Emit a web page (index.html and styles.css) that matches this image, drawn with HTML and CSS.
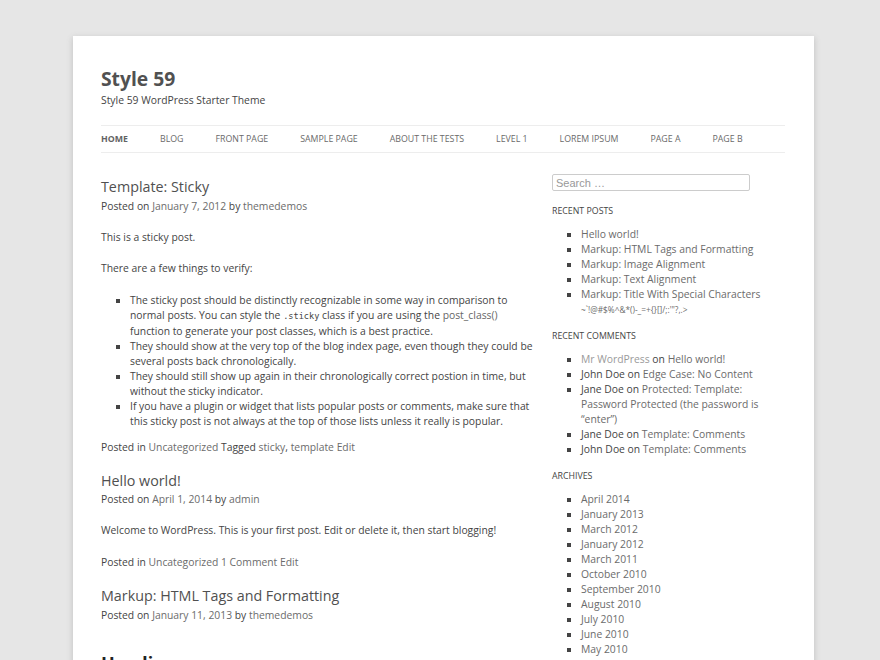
FILE: index.html
```html
<!DOCTYPE html>
<html>
<head>
<meta charset="utf-8">
<link rel="stylesheet" href="styles.css">
</head>
<body>
<div class="site">
  <header class="site-header">
    <h1 class="site-title">Style 59</h1>
    <p class="site-desc">Style 59 WordPress Starter Theme</p>
    <nav class="nav">
      <a class="current">HOME</a>
      <a>BLOG</a>
      <a>FRONT PAGE</a>
      <a>SAMPLE PAGE</a>
      <a>ABOUT THE TESTS</a>
      <a>LEVEL 1</a>
      <a>LOREM IPSUM</a>
      <a>PAGE A</a>
      <a>PAGE B</a>
    </nav>
  </header>
  <div class="main">
    <div class="content">
      <article class="post">
        <h2 class="entry-title">Template: Sticky</h2>
        <div class="meta">Posted on <a>January 7, 2012</a> by <a>themedemos</a></div>
        <div class="entry">
          <p>This is a sticky post.</p>
          <p>There are a few things to verify:</p>
          <ul>
            <li>The sticky post should be distinctly recognizable in some way in comparison to normal posts. You can style the <code>.sticky</code> class if you are using the <a>post_class()</a> function to generate your post classes, which is a best practice.</li>
            <li>They should show at the very top of the blog index page, even though they could be several posts back chronologically.</li>
            <li>They should still show up again in their chronologically correct postion in time, but without the sticky indicator.</li>
            <li>If you have a plugin or widget that lists popular posts or comments, make sure that this sticky post is not always at the top of those lists unless it really is popular.</li>
          </ul>
        </div>
        <div class="footer-meta">Posted in <a>Uncategorized</a> Tagged <a>sticky</a>, <a>template</a> <a>Edit</a></div>
      </article>
      <article class="post">
        <h2 class="entry-title">Hello world!</h2>
        <div class="meta">Posted on <a>April 1, 2014</a> by <a>admin</a></div>
        <div class="entry short">
          <p>Welcome to WordPress. This is your first post. Edit or delete it, then start blogging!</p>
        </div>
        <div class="footer-meta">Posted in <a>Uncategorized</a> <a>1 Comment</a> <a>Edit</a></div>
      </article>
      <article class="post">
        <h2 class="entry-title">Markup: HTML Tags and Formatting</h2>
        <div class="meta">Posted on <a>January 11, 2013</a> by <a>themedemos</a></div>
        <div class="entry">
          <h2 class="heading">Headings</h2>
        </div>
      </article>
    </div>
    <aside class="sidebar">
      <input class="search" type="text" placeholder="Search …">
      <h3 class="widget-title">RECENT POSTS</h3>
      <ul class="wlist">
        <li><a>Hello world!</a></li>
        <li><a>Markup: HTML Tags and Formatting</a></li>
        <li><a>Markup: Image Alignment</a></li>
        <li><a>Markup: Text Alignment</a></li>
        <li><a>Markup: Title With Special Characters <span class="special">~`!@#$%^&amp;*()-_=+{}[]/;:'"?,.&gt;</span></a></li>
      </ul>
      <h3 class="widget-title mid">RECENT COMMENTS</h3>
      <ul class="wlist">
        <li><a class="light">Mr WordPress</a> on <a>Hello world!</a></li>
        <li>John Doe on <a>Edge Case: No Content</a></li>
        <li>Jane Doe on <a>Protected: Template: Password Protected (the password is “enter”)</a></li>
        <li>Jane Doe on <a>Template: Comments</a></li>
        <li>John Doe on <a>Template: Comments</a></li>
      </ul>
      <h3 class="widget-title last">ARCHIVES</h3>
      <ul class="wlist">
        <li><a>April 2014</a></li>
        <li><a>January 2013</a></li>
        <li><a>March 2012</a></li>
        <li><a>January 2012</a></li>
        <li><a>March 2011</a></li>
        <li><a>October 2010</a></li>
        <li><a>September 2010</a></li>
        <li><a>August 2010</a></li>
        <li><a>July 2010</a></li>
        <li><a>June 2010</a></li>
        <li><a>May 2010</a></li>
        <li><a>April 2010</a></li>
      </ul>
    </aside>
  </div>
</div>
</body>
</html>
```

FILE: styles.css
```css
html, body {
  margin: 0;
  padding: 0;
}
body {
  background: #e6e6e6;
  font-family: "Open Sans", "Noto Sans", sans-serif;
  color: #444;
  font-size: 10.35px;
  line-height: 15px;
  height: 660px;
  overflow: hidden;
}
a {
  color: #666;
  text-decoration: none;
}
.site {
  width: 684px;
  margin: 36px 0 0 73px;
  padding: 0 29px 0 28px;
  background: #fff;
  box-shadow: 0 2px 6px rgba(100, 100, 100, 0.3);
  min-height: 700px;
}
.site-header {
  padding-top: 30px;
}
.site-title {
  margin: 0;
  font-size: 19.3px;
  line-height: 26px;
  font-weight: 700;
  color: #515151;
}
.site-desc {
  margin: 1px 0 0;
  font-size: 10.35px;
  line-height: 15px;
  color: #444;
}
.nav {
  margin-top: 17px;
  border-top: 1px solid #ededed;
  border-bottom: 1px solid #ededed;
  display: flex;
  gap: 32px;
  height: 26px;
  align-items: center;
  font-size: 8.8px;
}
.nav a {
  color: #6a6a6a;
}
.nav a.current {
  font-weight: 700;
  color: #636363;
}
.main {
  display: flex;
  justify-content: space-between;
  padding-top: 24px;
}
.content {
  width: 432px;
}
.post {
  margin-bottom: 16px;
}
.entry-title {
  margin: 0 0 1.5px;
  font-size: 14.3px;
  line-height: 20px;
  font-weight: 400;
  color: #505050;
}
.meta {
  color: #444;
}
.meta a, .footer-meta a {
  color: #6b6b6b;
}
.entry p {
  margin: 16px 0 0;
}
.entry.short {
  padding-bottom: 6px;
}
.entry ul {
  margin: 17px 0 0;
  padding-left: 29px;
  list-style: square;
}
code {
  font-family: "DejaVu Sans Mono", monospace;
  font-size: 8.6px;
}
.footer-meta {
  margin-top: 11px;
}
.heading {
  margin: 28px 0 0;
  font-size: 18px;
  line-height: 24px;
  font-weight: 700;
  color: #222;
}
.sidebar {
  width: 233px;
}
.search {
  display: block;
  box-sizing: border-box;
  width: 198px;
  height: 17px;
  margin: -3px 0 0;
  padding: 0 3px;
  border: 1px solid #ccc;
  border-radius: 2px;
  font-family: "Liberation Sans", Arial, sans-serif;
  font-size: 11px;
  color: #999;
}
.search::placeholder {
  color: #999;
}
.widget-title {
  margin: 13px 0 0;
  font-size: 8.8px;
  font-weight: 400;
  line-height: 15px;
  color: #444;
}
.widget-title.mid {
  margin-top: 12px;
}
.widget-title.last {
  margin-top: 12px;
}
.wlist {
  margin: 8px 0 0;
  padding-left: 29px;
  list-style: square;
  color: #444;
}
.wlist a {
  color: #6b6b6b;
}
.wlist a.light {
  color: #9a9a9a;
}
.special {
  font-size: 8.3px;
}
```
